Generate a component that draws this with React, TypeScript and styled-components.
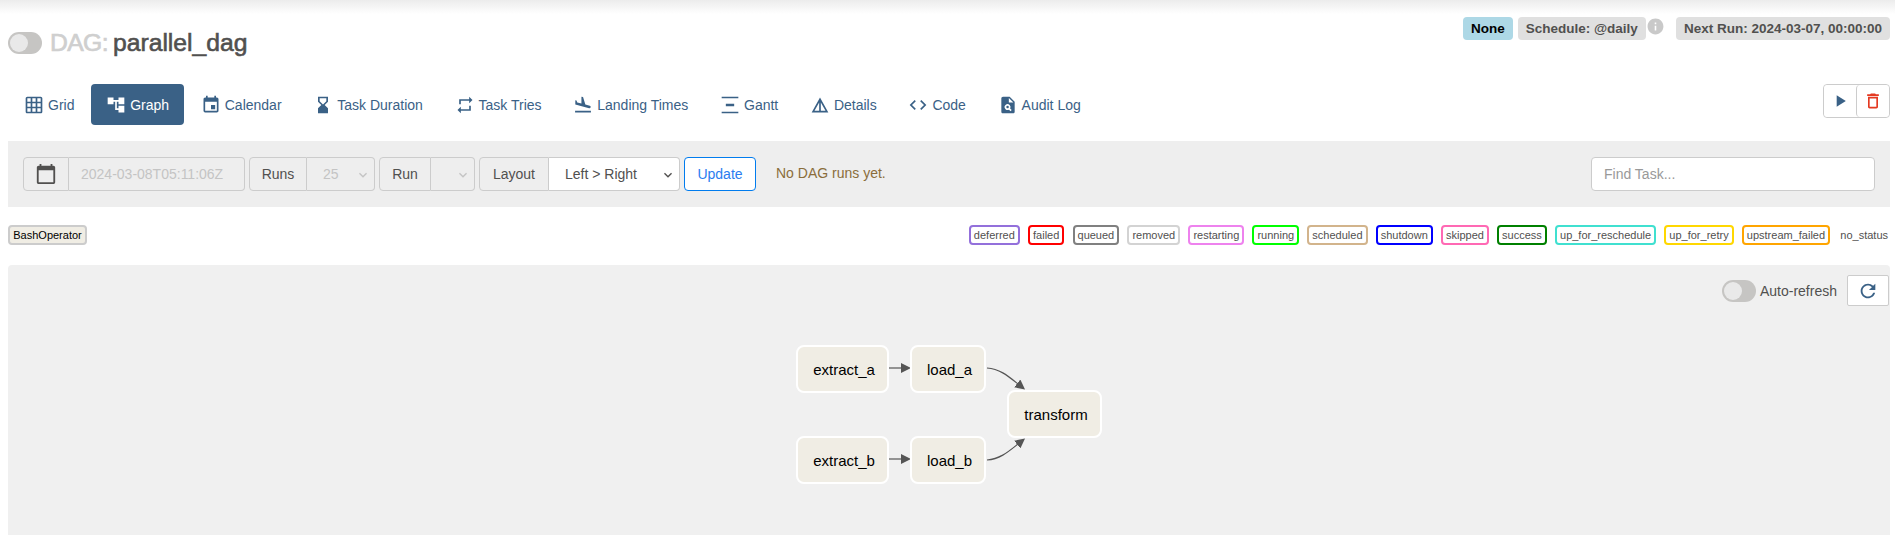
import styled, { createGlobalStyle } from "styled-components";
import type { ReactNode } from "react";
import {
  MdAccountTree,
  MdCalendarToday,
  MdCode,
  MdDeleteOutline,
  MdDetails,
  MdEvent,
  MdFlightLand,
  MdGridOn,
  MdHourglassBottom,
  MdInfo,
  MdKeyboardArrowDown,
  MdPlagiarism,
  MdPlayArrow,
  MdRefresh,
  MdRepeat,
  MdVerticalDistribute,
} from "react-icons/md";

const GlobalStyle = createGlobalStyle`
  * {
    box-sizing: border-box;
  }
  html, body {
    margin: 0;
    padding: 0;
    background: #fff;
    font-family: "Liberation Sans", Arial, sans-serif;
    font-size: 14px;
    color: #51504f;
  }
`;

const Page = styled.div`
  height: 535px;
  overflow: hidden;
`;

const TopShade = styled.div`
  height: 14px;
  background: linear-gradient(#ececec, #fff);
`;

const Content = styled.div`
  padding: 0 5px 0 8px;
`;

const Header = styled.div`
  height: 70px;
  display: flex;
  justify-content: space-between;
  align-items: flex-start;
`;

const Title = styled.h1`
  margin: 18px 0 0;
  display: flex;
  align-items: center;
  height: 22px;
  font-size: 24.7px;
  font-weight: 400;
  line-height: 22px;
`;

const Switch = styled.span`
  display: inline-block;
  position: relative;
  width: 34px;
  height: 22px;
  border-radius: 11px;
  background: #c6c5c3;
  margin-right: 8px;

  &::after {
    content: "";
    position: absolute;
    left: 2px;
    top: 2px;
    width: 18px;
    height: 18px;
    border-radius: 50%;
    background: #e9e9e9;
  }
`;

const DagLabel = styled.span`
  color: #cfcfcf;
  margin-right: 5px;
  letter-spacing: -0.6px;
  -webkit-text-stroke: 0.7px #cfcfcf;
`;

const DagName = styled.span`
  color: #51504f;
  -webkit-text-stroke: 0.6px #51504f;
`;

const Badges = styled.div`
  display: flex;
  align-items: flex-start;
  padding: 3px 0 0;
`;

const Badge = styled.span<{ $bg: string; $fg: string; $gap?: number }>`
  height: 23px;
  padding: 0 8px;
  border-radius: 4px;
  background: ${(p) => p.$bg};
  color: ${(p) => p.$fg};
  font-size: 13.5px;
  font-weight: 700;
  line-height: 23px;
  margin-right: ${(p) => p.$gap ?? 0}px;
  white-space: nowrap;
`;

const InfoMark = styled.span`
  color: #c9c9c9;
  display: flex;
  margin: 0 11px 0 0;
  font-size: 19px;
`;

const TabRow = styled.div`
  height: 41px;
  display: flex;
  justify-content: space-between;
  align-items: flex-start;
`;

const Tabs = styled.nav`
  display: flex;
  gap: 1.7px;
  margin-left: 1px;
`;

const Tab = styled.a<{ $active?: boolean }>`
  height: 41px;
  display: flex;
  align-items: center;
  gap: 4px;
  padding: 0 15px;
  border-radius: 4px;
  font-size: 14px;
  color: ${(p) => (p.$active ? "#fff" : "#3a6186")};
  background: ${(p) => (p.$active ? "#3a6186" : "transparent")};
  svg {
    font-size: 20px;
    flex: none;
  }
`;

const ActionGroup = styled.div`
  display: flex;
  height: 34px;
  width: 67px;
  border: 1px solid #ccc;
  border-radius: 4px;
`;

const ActionButton = styled.button<{ $color: string; $divider?: boolean }>`
  flex: 1;
  padding: 0;
  display: flex;
  align-items: center;
  justify-content: center;
  border: 0;
  border-left: ${(p) => (p.$divider ? "1px solid #ccc" : "0")};
  background: #fff;
  color: ${(p) => p.$color};
  font-size: 20px;
  border-radius: 4px;
`;

const Toolbar = styled.div`
  margin-top: 16px;
  height: 66px;
  padding: 16px 15px;
  background: #eee;
  display: flex;
  align-items: center;
`;

const InputGroup = styled.div`
  display: flex;
  height: 34px;
  margin-right: 4px;
`;

const Addon = styled.span<{ $width: number }>`
  width: ${(p) => p.$width}px;
  display: flex;
  align-items: center;
  justify-content: center;
  border: 1px solid #ccc;
  border-radius: 4px 0 0 4px;
  background: #eee;
  color: #51504f;
  font-size: 14px;
  svg {
    font-size: 22px;
  }
`;

const DateInput = styled.input`
  width: 176px;
  height: 34px;
  padding: 0 12px;
  border: 1px solid #ccc;
  border-left: 0;
  border-radius: 0 4px 4px 0;
  background: #eee;
  color: #c4c4c4;
  font: 14px "Liberation Sans", Arial, sans-serif;

  &:disabled {
    -webkit-text-fill-color: #c4c4c4;
    opacity: 1;
  }
`;

const SelectBox = styled.div<{ $width: number; $enabled?: boolean }>`
  position: relative;
  width: ${(p) => p.$width}px;
  height: 34px;
  padding-left: 16px;
  display: flex;
  align-items: center;
  border: 1px solid #ccc;
  border-left: 0;
  border-radius: 0 4px 4px 0;
  background: ${(p) => (p.$enabled ? "#fff" : "#eee")};
  color: ${(p) => (p.$enabled ? "#51504f" : "#c4c4c4")};
  font-size: 14px;
`;

const Chevron = styled.span<{ $enabled?: boolean }>`
  position: absolute;
  right: 3px;
  top: 9px;
  display: flex;
  font-size: 16px;
  color: ${(p) => (p.$enabled ? "#51504f" : "#c4c4c4")};
`;

const UpdateButton = styled.button`
  width: 72px;
  height: 34px;
  padding: 0;
  border: 1px solid #017cee;
  border-radius: 4px;
  background: #fff;
  color: #2a7df0;
  font: 14px "Liberation Sans", Arial, sans-serif;
`;

const NoRuns = styled.span`
  margin-left: 20px;
  color: #8a6d3b;
  font-size: 14px;
  position: relative;
  top: -1px;
`;

const FindInput = styled.input`
  margin-left: auto;
  width: 284px;
  height: 34px;
  padding: 0 12px;
  border: 1px solid #ccc;
  border-radius: 4px;
  background: #fff;
  font: 14px "Liberation Sans", Arial, sans-serif;

  &::placeholder {
    color: #999;
  }
`;

const Legend = styled.div`
  margin-top: 18px;
  height: 20px;
  display: flex;
  justify-content: space-between;
`;

const OperatorChip = styled.span`
  height: 20px;
  width: 79px;
  border: 2px solid #ccc;
  border-radius: 4px;
  background: #f0ede4;
  color: #000;
  font-size: 11px;
  line-height: 16px;
  text-align: center;
  white-space: nowrap;
`;

const StateList = styled.div`
  display: flex;
  gap: 8.2px;
  padding-right: 2px;
`;

const StateChip = styled.span<{ $color?: string }>`
  height: 20px;
  padding: 0 ${(p) => (p.$color ? 3 : 0)}px;
  border: ${(p) => (p.$color ? `2px solid ${p.$color}` : "0")};
  border-radius: 4px;
  color: #51504f;
  font-size: 11px;
  line-height: ${(p) => (p.$color ? 16 : 20)}px;
  margin-left: ${(p) => (p.$color ? 0 : 2)}px;
  white-space: nowrap;
`;

const GraphPanel = styled.div`
  position: relative;
  margin-top: 20px;
  height: 270px;
  padding: 10px 1px 0 0;
  background: #f0f0f0;
  border-radius: 4px 4px 0 0;
`;

const RefreshRow = styled.div`
  display: flex;
  justify-content: flex-end;
  align-items: center;
  height: 31px;
`;

const AutoLabel = styled.span`
  margin: 0 10px 0 4px;
  font-size: 14px;
  color: #51504f;
`;

const RefreshButton = styled.button`
  width: 42px;
  height: 31px;
  padding: 0;
  display: flex;
  align-items: center;
  justify-content: center;
  border: 1px solid #ccc;
  border-radius: 2px;
  background: #fff;
  color: #3a6186;
  font-size: 22px;
`;

const SwitchPlain = styled(Switch)`
  margin-right: 0;
`;

const GraphNode = styled.div<{ $x: number; $y: number; $w: number }>`
  position: absolute;
  left: ${(p) => p.$x}px;
  top: ${(p) => p.$y}px;
  width: ${(p) => p.$w}px;
  height: 48px;
  padding-left: 3px;
  display: flex;
  align-items: center;
  justify-content: center;
  border: 2px solid #fff;
  border-radius: 8px;
  background: #f0ede4;
  color: #000;
  font-size: 15px;
`;

const Edges = styled.svg`
  position: absolute;
  left: 0;
  top: 0;
`;

const STATES: [string, string | undefined][] = [
  ["deferred", "mediumpurple"],
  ["failed", "red"],
  ["queued", "gray"],
  ["removed", "lightgrey"],
  ["restarting", "violet"],
  ["running", "lime"],
  ["scheduled", "tan"],
  ["shutdown", "blue"],
  ["skipped", "hotpink"],
  ["success", "green"],
  ["up_for_reschedule", "turquoise"],
  ["up_for_retry", "gold"],
  ["upstream_failed", "orange"],
  ["no_status", undefined],
];

const TABS: { label: string; icon: ReactNode; active?: boolean }[] = [
  { label: "Grid", icon: <MdGridOn /> },
  { label: "Graph", icon: <MdAccountTree />, active: true },
  { label: "Calendar", icon: <MdEvent /> },
  { label: "Task Duration", icon: <MdHourglassBottom /> },
  { label: "Task Tries", icon: <MdRepeat /> },
  { label: "Landing Times", icon: <MdFlightLand /> },
  { label: "Gantt", icon: <MdVerticalDistribute /> },
  { label: "Details", icon: <MdDetails /> },
  { label: "Code", icon: <MdCode /> },
  { label: "Audit Log", icon: <MdPlagiarism /> },
];

const NODES = [
  { name: "extract_a", x: 788, y: 80, w: 93 },
  { name: "load_a", x: 902, y: 80, w: 76 },
  { name: "transform", x: 999, y: 125, w: 95 },
  { name: "extract_b", x: 788, y: 171, w: 93 },
  { name: "load_b", x: 902, y: 171, w: 76 },
];

const EDGES = [
  "M881 103 L894 103",
  "M881 194 L894 194",
  "M979 103 C992 104 1000 111 1010 119",
  "M979 195 C992 194 1000 187 1010 179",
];

const App = () => {
  return (
    <Page>
      <GlobalStyle />
      <TopShade />
      <Content>
        <Header>
          <Title>
            <Switch />
            <DagLabel>DAG:</DagLabel>
            <DagName>parallel_dag</DagName>
          </Title>
          <Badges>
            <Badge $bg="#add8e6" $fg="#000" $gap={5}>None</Badge>
            <Badge $bg="#e0e0e0" $fg="#51504f">Schedule: @daily</Badge>
            <InfoMark><MdInfo /></InfoMark>
            <Badge $bg="#e0e0e0" $fg="#51504f">Next Run: 2024-03-07, 00:00:00</Badge>
          </Badges>
        </Header>

        <TabRow>
          <Tabs>
            {TABS.map((tab) => (
              <Tab key={tab.label} $active={tab.active}>
                {tab.icon}
                {tab.label}
              </Tab>
            ))}
          </Tabs>
          <ActionGroup>
            <ActionButton $color="#3a6186"><MdPlayArrow /></ActionButton>
            <ActionButton $color="#e43921" $divider><MdDeleteOutline /></ActionButton>
          </ActionGroup>
        </TabRow>

        <Toolbar>
          <InputGroup>
            <Addon $width={46}><MdCalendarToday /></Addon>
            <DateInput disabled value="2024-03-08T05:11:06Z" readOnly />
          </InputGroup>
          <InputGroup>
            <Addon $width={58}>Runs</Addon>
            <SelectBox $width={68}>
              25
              <Chevron><MdKeyboardArrowDown /></Chevron>
            </SelectBox>
          </InputGroup>
          <InputGroup>
            <Addon $width={52}>Run</Addon>
            <SelectBox $width={44}>
              <Chevron><MdKeyboardArrowDown /></Chevron>
            </SelectBox>
          </InputGroup>
          <InputGroup>
            <Addon $width={70}>Layout</Addon>
            <SelectBox $width={131} $enabled>
              Left &gt; Right
              <Chevron $enabled><MdKeyboardArrowDown /></Chevron>
            </SelectBox>
          </InputGroup>
          <UpdateButton>Update</UpdateButton>
          <NoRuns>No DAG runs yet.</NoRuns>
          <FindInput placeholder="Find Task..." />
        </Toolbar>

        <Legend>
          <OperatorChip>BashOperator</OperatorChip>
          <StateList>
            {STATES.map(([name, color]) => (
              <StateChip key={name} $color={color}>{name}</StateChip>
            ))}
          </StateList>
        </Legend>

        <GraphPanel>
          <RefreshRow>
            <SwitchPlain />
            <AutoLabel>Auto-refresh</AutoLabel>
            <RefreshButton><MdRefresh /></RefreshButton>
          </RefreshRow>
          <Edges width="1882" height="270">
            <defs>
              <marker id="arrow" markerWidth="10" markerHeight="10" refX="1" refY="5" orient="auto" markerUnits="userSpaceOnUse">
                <path d="M0 0 L10 5 L0 10 Z" fill="#555" />
              </marker>
            </defs>
            {EDGES.map((d) => (
              <path key={d} d={d} fill="none" stroke="#555" strokeWidth="1.2" markerEnd="url(#arrow)" />
            ))}
          </Edges>
          {NODES.map((node) => (
            <GraphNode key={node.name} $x={node.x} $y={node.y} $w={node.w}>{node.name}</GraphNode>
          ))}
        </GraphPanel>
      </Content>
    </Page>
  );
};

export default App;
